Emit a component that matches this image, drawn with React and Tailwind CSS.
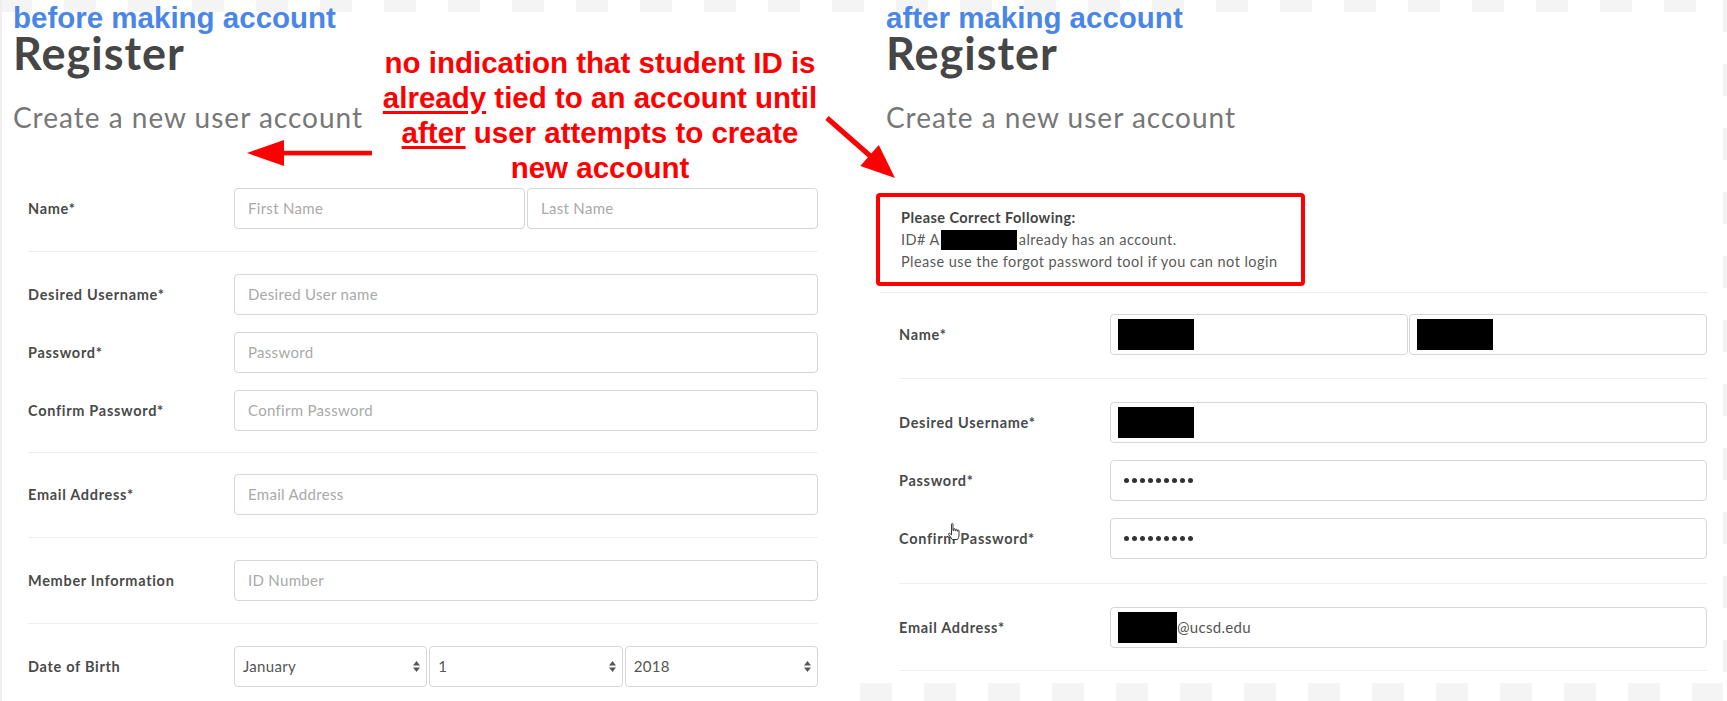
import React from "react";

function Header({ label }) {
  return (
    <div className="flex flex-col">
      <div className="pt-[3px] h-[33px] font-['Liberation_Sans',Arial,sans-serif] font-bold text-[29.5px] leading-[30px] text-[#4a86e8] whitespace-nowrap">
        {label}
      </div>
      <div className="h-[40px] font-['Lato',sans-serif] font-bold text-[45px] leading-[40px] tracking-[1px] text-[#464646] whitespace-nowrap">
        Register
      </div>
      <div className="mt-[28px] h-[32px] font-['Lato',sans-serif] text-[28px] leading-[32px] tracking-[1px] text-[#777777] whitespace-nowrap">
        Create a new user account
      </div>
    </div>
  );
}

function Field({ children, className = "" }) {
  return (
    <div
      className={
        "h-[41px] border border-[#d6d6d6] rounded-[4px] bg-white flex items-center text-[15px] tracking-[0.3px] font-['Lato',sans-serif] min-w-0 " +
        className
      }
    >
      {children}
    </div>
  );
}

function Placeholder({ text }) {
  return (
    <Field className="flex-1 pl-[13px]">
      <span className="text-[#a9a9a9] whitespace-nowrap">{text}</span>
    </Field>
  );
}

function Arrows() {
  return (
    <svg width="7" height="11" viewBox="0 0 7 11" className="shrink-0">
      <polygon points="0,4.5 3.5,0 7,4.5" fill="#555" />
      <polygon points="0,6.5 3.5,11 7,6.5" fill="#555" />
    </svg>
  );
}

function SelectBox({ value }) {
  return (
    <Field className="flex-1 pl-[8px] pr-[6px] justify-between">
      <span className="text-[#555555] whitespace-nowrap">{value}</span>
      <Arrows />
    </Field>
  );
}

function Label({ text, w }) {
  return (
    <div
      className={
        "shrink-0 font-['Lato',sans-serif] font-bold text-[14.5px] tracking-[0.7px] text-[#4a4a4a] whitespace-nowrap " +
        w
      }
    >
      {text}
    </div>
  );
}

function LeftRow({ label, children }) {
  return (
    <div className="flex items-center">
      <Label text={label} w="w-[206px]" />
      <div className="flex-1 flex gap-[2px] min-w-0">{children}</div>
    </div>
  );
}

function RightRow({ label, children, labelExtra }) {
  return (
    <div className="flex items-center">
      <div className="relative w-[211px] shrink-0">
        <Label text={label} w="" />
        {labelExtra}
      </div>
      <div className="flex-1 flex gap-[1px] min-w-0">{children}</div>
    </div>
  );
}

function Redact({ w = "w-[76px]" }) {
  return <div className={"h-[31px] bg-black shrink-0 " + w} />;
}

function Dots() {
  const dots = [0, 1, 2, 3, 4, 5, 6, 7, 8];
  return (
    <Field className="flex-1 pl-[13px] gap-[3px]">
      {dots.map((d) => (
        <span key={d} className="w-[5px] h-[5px] rounded-full bg-[#333333] shrink-0" />
      ))}
    </Field>
  );
}

function HandCursor() {
  return (
    <svg
      width="15"
      height="18"
      viewBox="0 0 15 18"
      className="absolute left-[48px] top-[-5px]"
    >
      <path
        d="M4.5 1.2C4.5 0.3 6 0.3 6 1.2V7.5H6.5V6.2C6.5 5.4 8 5.4 8 6.2V7.6H8.5V6.8C8.5 6 10 6 10 6.8V8.2H10.5V7.6C10.5 6.8 12 6.8 12 7.6V12C12 14 11.2 15 10.6 16.5H5.3L1.6 11.6C1 10.8 2 9.9 2.8 10.5L4.5 11.9Z"
        fill="#fff"
        stroke="#222"
        strokeWidth="0.9"
        strokeLinejoin="round"
      />
    </svg>
  );
}

function LeftPanel() {
  return (
    <div className="w-[860px] h-full shrink-0 border-l-2 border-[#efefef] flex flex-col">
      <div className="pl-[11px]">
        <Header label="before making account" />
      </div>
      <div className="mt-[32px] ml-[26px] w-[790px] flex flex-col">
        <div className="pt-[23px] pb-[22px] flex flex-col gap-[17px]">
          <LeftRow label="Name*">
            <Placeholder text="First Name" />
            <Placeholder text="Last Name" />
          </LeftRow>
        </div>
        <div className="border-t border-[#eeeeee] pt-[22px] pb-[21px] flex flex-col gap-[17px]">
          <LeftRow label="Desired Username*">
            <Placeholder text="Desired User name" />
          </LeftRow>
          <LeftRow label="Password*">
            <Placeholder text="Password" />
          </LeftRow>
          <LeftRow label="Confirm Password*">
            <Placeholder text="Confirm Password" />
          </LeftRow>
        </div>
        <div className="border-t border-[#eeeeee] pt-[21px] pb-[22px]">
          <LeftRow label="Email Address*">
            <Placeholder text="Email Address" />
          </LeftRow>
        </div>
        <div className="border-t border-[#eeeeee] pt-[22px] pb-[22px]">
          <LeftRow label="Member Information">
            <Placeholder text="ID Number" />
          </LeftRow>
        </div>
        <div className="border-t border-[#eeeeee] pt-[22px]">
          <LeftRow label="Date of Birth">
            <SelectBox value="January" />
            <SelectBox value="1" />
            <SelectBox value="2018" />
          </LeftRow>
        </div>
      </div>
    </div>
  );
}

function RightPanel() {
  return (
    <div className="flex-1 h-full flex">
      <div className="flex-1 flex flex-col">
        <div className="h-[683px] flex flex-col">
          <div className="pl-[26px]">
            <Header label="after making account" />
          </div>
          <div className="mt-[60px] ml-[16px] w-[429px] h-[93px] border-4 border-[#ff0000] rounded-[4px] pt-[10px] pb-[9px] pl-[21px] font-['Lato',sans-serif] text-[14.5px] tracking-[0.45px] leading-[22px] text-[#5a5a5a] whitespace-nowrap">
            <div className="font-bold text-[#444444]">Please Correct Following:</div>
            <div className="flex items-center">
              <span>ID# A</span>
              <span className="inline-block w-[76px] h-[20px] bg-black ml-[1px] mr-[2px]" />
              <span>already has an account.</span>
            </div>
            <div>Please use the forgot password tool if you can not login</div>
          </div>
          <div className="mt-[6px] ml-[20px] w-[828px] border-t border-[#eeeeee]" />
          <div className="ml-[39px] w-[808px] flex flex-col">
            <div className="pt-[21px] pb-[23px]">
              <RightRow label="Name*">
                <Field className="flex-1 pl-[7px]">
                  <Redact />
                </Field>
                <Field className="flex-1 pl-[7px]">
                  <Redact />
                </Field>
              </RightRow>
            </div>
            <div className="border-t border-[#eeeeee] pt-[23px] pb-[24px] flex flex-col gap-[17px]">
              <RightRow label="Desired Username*">
                <Field className="flex-1 pl-[7px]">
                  <Redact />
                </Field>
              </RightRow>
              <RightRow label="Password*">
                <Dots />
              </RightRow>
              <RightRow label="Confirm Password*" labelExtra={<HandCursor />}>
                <Dots />
              </RightRow>
            </div>
            <div className="border-t border-[#eeeeee] pt-[23px] pb-[22px]">
              <RightRow label="Email Address*">
                <Field className="flex-1 pl-[7px]">
                  <Redact w="w-[59px]" />
                  <span className="text-[#555555]">@ucsd.edu</span>
                </Field>
              </RightRow>
            </div>
            <div className="border-t border-[#eeeeee]" />
          </div>
        </div>
        <div className="flex-1 bg-[repeating-linear-gradient(90deg,#f4f4f4_0px,#f4f4f4_32px,#ffffff_32px,#ffffff_64px)]" />
      </div>
      <div className="w-[4px] h-full bg-[repeating-linear-gradient(180deg,#f2f2f2_0px,#f2f2f2_32px,#ffffff_32px,#ffffff_64px)]" />
    </div>
  );
}

function Annotations() {
  return (
    <>
      <div className="absolute left-[600px] top-[45px] -translate-x-1/2 text-center whitespace-nowrap font-['Liberation_Sans',Arial,sans-serif] font-bold text-[29.5px] leading-[35px] text-[#ff0000]">
        no indication that student ID is
        <br />
        <span className="underline decoration-[2.5px] underline-offset-[3px]">already</span> tied to an account until
        <br />
        <span className="underline decoration-[2.5px] underline-offset-[3px]">after</span> user attempts to create
        <br />
        new account
      </div>
      <svg
        className="absolute left-0 top-0 pointer-events-none"
        width="1727"
        height="701"
        viewBox="0 0 1727 701"
      >
        <rect x="280" y="150.8" width="92" height="4.6" fill="#ff0000" />
        <polygon points="247,153 284,140 284,166" fill="#ff0000" />
        <line x1="827" y1="118" x2="872" y2="157.5" stroke="#ff0000" strokeWidth="5" />
        <polygon points="895,178 860.3,166 878.8,145" fill="#ff0000" />
      </svg>
    </>
  );
}

export default function App() {
  return (
    <div className="relative w-[1727px] h-[701px] overflow-hidden bg-white bg-[repeating-linear-gradient(90deg,#f4f4f4_0px,#f4f4f4_32px,#ffffff_32px,#ffffff_64px)] bg-no-repeat bg-[length:100%_12px] flex">
      <LeftPanel />
      <RightPanel />
      <Annotations />
    </div>
  );
}
